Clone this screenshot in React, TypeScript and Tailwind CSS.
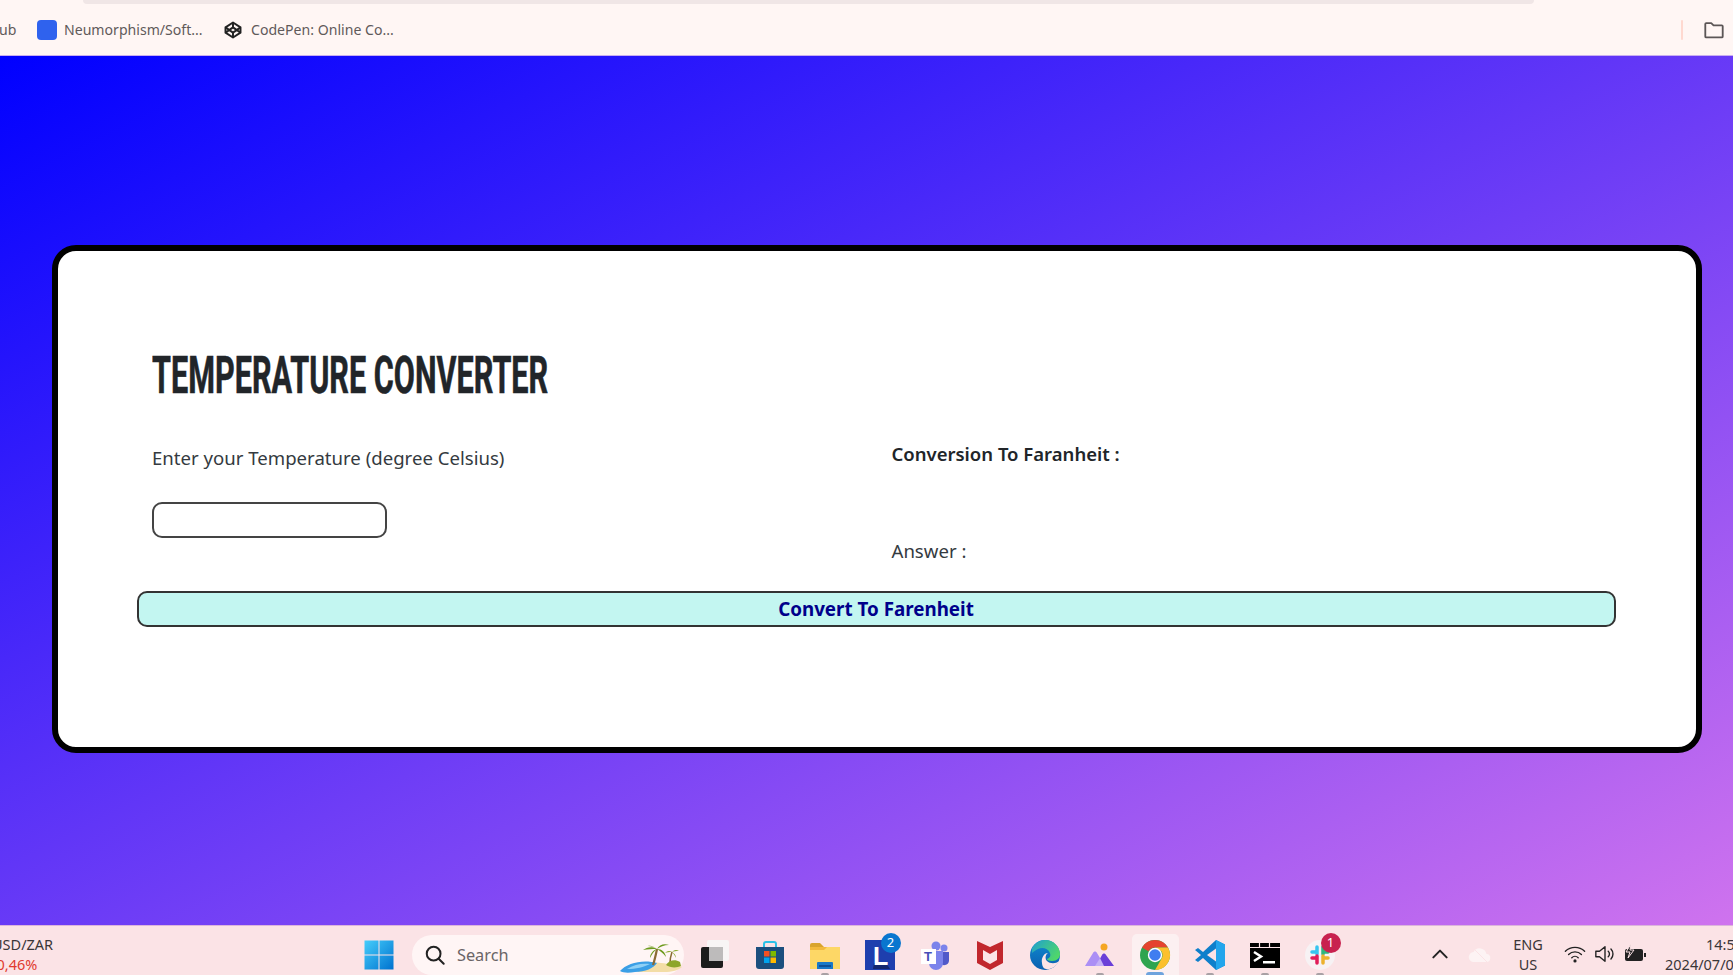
import React from "react";

const sans = "font-['Noto_Sans',sans-serif]";

function Win() {
  return (
    <svg width="32" height="32" viewBox="0 0 32 32">
      <defs>
        <linearGradient id="w" x1="0" y1="0" x2="1" y2="1">
          <stop offset="0" stopColor="#45cdfb" />
          <stop offset="1" stopColor="#0072cf" />
        </linearGradient>
      </defs>
      <path fill="url(#w)" d="M1.500 1.500h14V15.500h-14zM16.500 1.500h14V15.500h-14zM1.500 16.500h14v14h-14zM16.500 16.500h14v14h-14z" />
    </svg>
  );
}
function Beach() {
  return (
    <svg width="64" height="32" viewBox="0 0 64 32">
      <path d="M18 31C26 24 34 20 42 22c8 1 16 1 21 4-3 3-10 5-18 5z" fill="#f3dda6" />
      <path d="M1 30C8 22 24 18 38 22c-3 5-12 9-22 9-6 1-12 1-15-1z" fill="#3b9fe6" />
      <path d="M8 28c7-5 16-6 23-5-6 3-14 5-23 5z" fill="#8fd0f5" />
      <path d="M34 24c2-6 3-11 4-16" stroke="#8a6a33" strokeWidth="2.200" fill="none" />
      <path d="M38 8c-5-3-10-2-14 1 5-1 9-1 14-1zM38 8c2-4 7-6 12-4-5 0-9 2-12 4zM38 8c-4 1-7 5-7 9 2-4 4-7 7-9zM38 8c5 0 8 3 9 8-3-4-6-6-9-8zM38 8c-3-2-6-4-9-3 3 0 6 1 9 3z" fill="#6d9a1c" />
      <path d="M51 22c0-5 1-8 2-11" stroke="#8a6a33" strokeWidth="1.500" fill="none" />
      <path d="M53 11c-3-2-5-1-7 1 2-1 4-1 7-1zM53 11c2-2 4-3 7-1-3 0-5 0-7 1zM53 11c2 1 4 3 4 6-1-2-2-4-4-6z" fill="#86a828" />
      <path d="M47 24c3-5 9-6 14-3l1 4c-4 2-11 2-15-1z" fill="#8ea62a" />
    </svg>
  );
}
function TaskView() {
  return (
    <svg width="32" height="32" viewBox="0 0 32 32">
      <rect x="8" y="1" width="22" height="21" rx="2" fill="#f8f5f5" />
      <rect x="2" y="8" width="22" height="21" rx="2" fill="#1c1c1c" />
      <path d="M10 8h14v14H10z" fill="#bdbbbb" />
    </svg>
  );
}
function Store() {
  return (
    <svg width="32" height="32" viewBox="0 0 32 32">
      <path d="M10 8V5a2 2 0 0 1 2-2h8a2 2 0 0 1 2 2v3" stroke="#2cc2e8" strokeWidth="2" fill="none" />
      <path d="M2 8h28v19a3 3 0 0 1-3 3H5a3 3 0 0 1-3-3z" fill="#1b4f7e" />
      <rect x="10" y="12" width="5.500" height="5.500" fill="#f25022" />
      <rect x="16.500" y="12" width="5.500" height="5.500" fill="#7fba00" />
      <rect x="10" y="18.500" width="5.500" height="5.500" fill="#00a4ef" />
      <rect x="16.500" y="18.500" width="5.500" height="5.500" fill="#ffb900" />
    </svg>
  );
}
function Folder() {
  return (
    <svg width="32" height="32" viewBox="0 0 32 32">
      <path d="M1 6a2 2 0 0 1 2-2h8l4 4h-14z" fill="#d9a42c" />
      <path d="M1 8h30v21a1 1 0 0 1-1 1H2a1 1 0 0 1-1-1z" fill="#f2b93b" />
      <path d="M1 11h14l3-3h13v21a1 1 0 0 1-1 1H2a1 1 0 0 1-1-1z" fill="#fdd766" />
      <path d="M9 23h14a1 1 0 0 1 1 1v6H8v-6a1 1 0 0 1 1-1z" fill="#1a78c8" />
      <rect x="10" y="26" width="12" height="2" fill="#0f4f96" />
    </svg>
  );
}
function LTile() {
  return (
    <svg width="32" height="32" viewBox="0 0 32 32">
      <rect x="1" y="1" width="30" height="30" fill="#1e3fae" />
      <path d="M9 30l1-6 12 0 4 6z" fill="#14276e" />
      <text x="9" y="26" fontSize="25" fontWeight="700" fontFamily="'Liberation Sans',sans-serif" fill="#ffffff">L</text>
    </svg>
  );
}
function Teams() {
  return (
    <svg width="32" height="32" viewBox="0 0 32 32">
      <circle cx="25" cy="9" r="3.500" fill="#7b83eb" />
      <circle cx="17" cy="7" r="4.500" fill="#7b83eb" />
      <path d="M21 13h9v9a5 5 0 0 1-9 2z" fill="#5059c9" />
      <path d="M10 12h14v12a7 7 0 0 1-14 0z" fill="#7b83eb" />
      <rect x="2" y="10" width="15" height="15" fill="#ffffff" />
      <text x="5" y="22" fontSize="13" fontWeight="700" fontFamily="'Liberation Sans',sans-serif" fill="#464eb8">T</text>
    </svg>
  );
}
function McAfee() {
  return (
    <svg width="32" height="32" viewBox="0 0 32 32">
      <path d="M3 2l13 6 13-6v22l-13 7-13-7z" fill="#c1272d" />
      <path d="M9 11l7 4 7-4v10l-7 4-7-4z" fill="#fbe3e6" />
    </svg>
  );
}
function Edge() {
  return (
    <svg width="32" height="32" viewBox="0 0 32 32">
      <defs>
        <linearGradient id="e1" x1="0" y1="0" x2="1" y2="0.600">
          <stop offset="0" stopColor="#1f9fd0" />
          <stop offset="1" stopColor="#4fd76a" />
        </linearGradient>
        <linearGradient id="e2" x1="0" y1="0" x2="0" y2="1">
          <stop offset="0" stopColor="#0f8bd0" />
          <stop offset="1" stopColor="#0a5fb0" />
        </linearGradient>
      </defs>
      <circle cx="16" cy="16" r="15" fill="url(#e2)" />
      <path d="M3 9C6 4 11 1 16 1c9 0 15 7 15 14 0 4-3 7-8 7-3 0-5-1-5-2 3-1 4-3 3-6-2-5-8-6-12-4-2 1-4 2-6 4z" fill="url(#e1)" />
      <path d="M13 24c-1-5 2-10 6-10-3 2-3 6-1 8 3 3 9 3 12 0-2 5-8 9-13 8-2 0-4-3-4-6z" fill="#fbe3e6" />
    </svg>
  );
}
function Mount() {
  return (
    <svg width="32" height="32" viewBox="0 0 32 32">
      <circle cx="20" cy="8" r="3.500" fill="#f5a623" />
      <path d="M1 27l8-13c1-2 3-2 4 0l3 5 3 8z" fill="#ab8ff5" />
      <path d="M12 27l6-11c1-2 3-2 4 0l8 11z" fill="#6a3fd8" />
      <path d="M11 27l5-8 4 8z" fill="#c3b0f6" />
    </svg>
  );
}
function Chrome() {
  return (
    <svg width="32" height="32" viewBox="0 0 32 32">
      <circle cx="16" cy="16" r="15" fill="#2ea44f" />
      <path d="M16 1a15 15 0 0 1 13 7.500L16 8.500a7.500 7.500 0 0 0-6.500 3.750L3 8.500A15 15 0 0 1 16 1z" fill="#e5432f" />
      <path d="M29 8.500A15 15 0 0 1 16 31l6.500-11.250a7.500 7.500 0 0 0 0-7.500L16 8.500z" fill="#fbc02d" />
      <circle cx="16" cy="16" r="7.200" fill="#ffffff" />
      <circle cx="16" cy="16" r="5.800" fill="#3f7df0" />
    </svg>
  );
}
function VSCode() {
  return (
    <svg width="32" height="32" viewBox="0 0 32 32">
      <path d="M22 1l9 4.500v21L22 31 9 19l-5 4-3-2 6-5-6-5 3-2 5 4z" fill="#0e7fcb" />
      <path d="M22 1l9 4.500v21L22 31z" fill="#22a5ec" />
      <path d="M22 9.500L13 16l9 6.500z" fill="#fbe3e6" />
    </svg>
  );
}
function Terminal() {
  return (
    <svg width="32" height="32" viewBox="0 0 32 32">
      <rect x="1" y="4" width="30" height="25" fill="#000000" />
      <path d="M10.500 4v4M20.500 4v4" stroke="#fbe3e6" strokeWidth="1.200" />
      <rect x="1" y="8" width="30" height="1" fill="#fbe3e6" />
      <path d="M5 13l7 4.500-7 4.500" stroke="#ffffff" strokeWidth="2.500" fill="none" />
      <rect x="14" y="22" width="12" height="2.500" fill="#ffffff" />
    </svg>
  );
}
function Slack() {
  return (
    <svg width="32" height="32" viewBox="0 0 32 32">
      <circle cx="16" cy="16" r="15" fill="#f7f2f4" />
      <g strokeWidth="3.500" strokeLinecap="round" fill="none">
        <path d="M13 8v7M8 13h3" stroke="#36c5f0" />
        <path d="M19 8v7M24 13h-3" stroke="#2eb67d" />
        <path d="M19 24v-7M24 19h-3" stroke="#ecb22e" />
        <path d="M13 24v-7M8 19h3" stroke="#e01e5a" />
      </g>
    </svg>
  );
}

function Dot({ kind }: { kind?: "gray" | "blue" }) {
  if (!kind) return null;
  return (
    <span
      className={
        kind === "blue"
          ? "absolute bottom-0 left-1/2 h-[3px] w-[18px] -translate-x-1/2 rounded-t-sm bg-[#6ea3dd]"
          : "absolute bottom-0 left-1/2 h-[2px] w-[8px] -translate-x-1/2 rounded-t-sm bg-[#a8a0a4]"
      }
    />
  );
}

function Badge({ n, color }: { n: string; color: string }) {
  return (
    <span
      className={`absolute right-[7px] top-[7px] flex h-[20px] w-[20px] items-center justify-center rounded-full text-[13px] text-white font-['Noto_Sans',sans-serif] ${color}`}
    >
      {n}
    </span>
  );
}

function Slot({
  children,
  dot,
  active,
  badge,
}: {
  children: React.ReactNode;
  dot?: "gray" | "blue";
  active?: boolean;
  badge?: React.ReactNode;
}) {
  return (
    <div className="relative flex h-full w-[55px] shrink-0 items-center justify-center">
      {active && <span className="absolute bottom-0 left-[4px] right-[4px] top-[8px] rounded-t-[5px] bg-[#fcf0f1]" />}
      <span className="relative flex items-center justify-center pt-[8px]">{children}</span>
      {badge}
      <Dot kind={dot} />
    </div>
  );
}

export default function App() {
  return (
    <div className={`flex h-[975px] w-[1733px] flex-col overflow-hidden ${sans}`}>
      {/* bookmarks bar */}
      <div className="relative flex h-[56px] shrink-0 items-center border-b border-[#c9aef0] bg-[#fff6f4] pt-[4px] text-[14.100px] text-[#5f5a5a]">
        <span className="absolute left-[83px] top-0 h-[4px] w-[1451px] rounded-b-[6px] bg-[#f0e6e6]" />
        <span className="-ml-[1px] w-[38px]">ub</span>
        <span className="h-[20px] w-[20px] rounded-[4px] bg-[#2f62ee]" />
        <span className="ml-[7px] w-[160px]">Neumorphism/Soft...</span>
        <svg width="18" height="18" viewBox="0 0 24 24" fill="none" stroke="#222222" strokeWidth="2.600" strokeLinejoin="round">
          <path d="M12 2l10 6.500v7L12 22 2 15.500v-7z" />
          <path d="M12 2v6.500M12 15.500V22M2 8.500l10 7 10-7M2 15.500l10-7 10 7" />
        </svg>
        <span className="ml-[9px]">CodePen: Online Co...</span>
        <span className="ml-auto h-[20px] w-[2px] rounded bg-[#ffd9d0]" />
        <svg className="ml-[20px] mr-[8px]" width="22" height="22" viewBox="0 0 24 24" fill="none" stroke="#5c5656" strokeWidth="2" strokeLinejoin="round">
          <path d="M2.500 19V5.500A1 1 0 0 1 3.500 4.500H9l2.500 2.500h9a1 1 0 0 1 1 1V19a1 1 0 0 1-1 1h-17a1 1 0 0 1-1-1z" />
        </svg>
      </div>

      {/* main */}
      <div className="flex-1 bg-[linear-gradient(to_bottom_right,#0000ff,#cf73ee)] pl-[52px] pr-[31px] pt-[189px]">
        <div className="h-[508px] rounded-[24px] border-[6px] border-black bg-white pl-[78.500px] pr-[80px] text-[#343a40]">
          <div className="ml-[15.500px] pt-[95px]">
            <h1 className="h-[60px] origin-left scale-x-[0.6] whitespace-nowrap font-['Roboto',sans-serif] text-[51px] font-bold leading-[60px] text-[#212529] [-webkit-text-stroke:0.6px_#212529]">
              TEMPERATURE CONVERTER
            </h1>
          </div>
          <div className="ml-[15.500px] mt-[25px] grid h-[136px] grid-cols-[739.500px_1fr]">
            <div>
              <p className="flex h-[53px] items-center text-[18.600px]">Enter your Temperature (degree Celsius)</p>
              <input className="mt-[18px] block h-[35.500px] w-[235px] rounded-[10px] border-2 border-[#444444] bg-white" />
            </div>
            <div>
              <p className="flex h-[46px] items-center text-[18.500px] font-semibold text-[#212529]">Conversion To Faranheit :</p>
              <p className="mt-[59px] flex h-[30px] items-center text-[18.600px]">Answer :</p>
            </div>
          </div>
          <button className="mt-[23.500px] block h-[36.500px] w-[1479px] rounded-[10px] border-2 border-[#333333] bg-[#c3f6f1] text-center text-[18.800px] font-bold text-[#00008b]">
            Convert To Farenheit
          </button>
        </div>
      </div>

      {/* taskbar */}
      <div className="flex h-[50px] shrink-0 items-stretch border-t border-[#dcb4dc] bg-[#fbe3e6] text-[#3a3638]">
        <div className="-ml-[8px] w-[371px] shrink-0 pt-[8px] text-[14.500px] leading-[20px]">
          <div>USD/ZAR</div>
          <div className="ml-[4.500px] text-[#e03a2e]">0,46%</div>
        </div>
        <div className="flex w-[49px] shrink-0 items-center pt-[8px]">
          <Win />
        </div>
        <div className="mt-[9px] flex h-[40px] w-[272px] shrink-0 items-center rounded-full bg-[#fff5f5] pl-[12px] text-[#6a6466]">
          <svg width="22" height="22" viewBox="0 0 24 24" fill="none" stroke="#222222" strokeWidth="2.200" strokeLinecap="round">
            <circle cx="10.500" cy="10.500" r="7.500" />
            <path d="M16 16l5.500 5.500" />
          </svg>
          <span className="ml-[11px] text-[16.300px]">Search</span>
          <span className="ml-auto mr-[1px] pt-[4px]">
            <Beach />
          </span>
        </div>
        <div className="ml-[3.500px] flex">
          <Slot><TaskView /></Slot>
          <Slot><Store /></Slot>
          <Slot dot="gray"><Folder /></Slot>
          <Slot badge={<Badge n="2" color="bg-[#0a76cf]" />}><LTile /></Slot>
          <Slot><Teams /></Slot>
          <Slot><McAfee /></Slot>
          <Slot><Edge /></Slot>
          <Slot dot="gray"><Mount /></Slot>
          <Slot active dot="blue"><Chrome /></Slot>
          <Slot dot="gray"><VSCode /></Slot>
          <Slot dot="gray"><Terminal /></Slot>
          <Slot dot="gray" badge={<Badge n="1" color="bg-[#c8224f]" />}><Slack /></Slot>
        </div>
        <div className="ml-[82.500px] flex w-[20px] shrink-0 items-center pt-[6px]">
          <svg width="20" height="20" viewBox="0 0 24 24" fill="none" stroke="#222222" strokeWidth="2.400" strokeLinecap="round" strokeLinejoin="round">
            <path d="M4 16l8-8 8 8" />
          </svg>
        </div>
        <div className="ml-[18px] flex w-[30px] shrink-0 items-center pt-[8px]">
          <svg width="24" height="20" viewBox="0 0 24 20">
            <path d="M6 17a5 5 0 0 1-.500-10 7 7 0 0 1 13 2 4 4 0 0 1-.500 8z" fill="#fdf3f4" />
            <path d="M4 2l16 16" stroke="#fbe3e6" strokeWidth="1" />
          </svg>
        </div>
        <div className="ml-[4px] w-[52px] shrink-0 pt-[8px] text-center text-[14.500px] leading-[20px]">
          <div>ENG</div>
          <div>US</div>
        </div>
        <div className="ml-[6px] flex w-[30px] shrink-0 items-center justify-center pt-[6px]">
          <svg width="22" height="20" viewBox="0 0 24 20" fill="none" stroke="#222222" strokeWidth="1.500" strokeLinecap="round">
            <path d="M1.500 7a15 15 0 0 1 21 0M5 10.500a10 10 0 0 1 14 0M8.500 14a5 5 0 0 1 7 0" />
            <circle cx="12" cy="17.500" r="1" fill="#222222" />
          </svg>
        </div>
        <div className="flex w-[30px] shrink-0 items-center justify-center pt-[6px]">
          <svg width="22" height="20" viewBox="0 0 24 20" fill="none" stroke="#222222" strokeWidth="1.500" strokeLinejoin="round" strokeLinecap="round">
            <path d="M2 7h4l6-5v16l-6-5H2z" />
            <path d="M15.500 7a4 4 0 0 1 0 6M18.500 4.500a8 8 0 0 1 0 11" />
          </svg>
        </div>
        <div className="flex w-[30px] shrink-0 items-center justify-center pt-[6px]">
          <svg width="24" height="20" viewBox="0 0 24 20">
            <rect x="2" y="5" width="18" height="12" rx="2" fill="#222222" />
            <rect x="21" y="9" width="2" height="4" fill="#222222" />
            <path d="M8 0L3 8h4l-2 6 6-8H7z" fill="#222222" stroke="#fbe3e6" strokeWidth="1" />
          </svg>
        </div>
        <div className="ml-[15px] w-[120px] shrink-0 pt-[8px] text-[14.500px] leading-[20px]">
          <div className="ml-[41px]">14:5</div>
          <div className="whitespace-nowrap">2024/07/0</div>
        </div>
      </div>
    </div>
  );
}
